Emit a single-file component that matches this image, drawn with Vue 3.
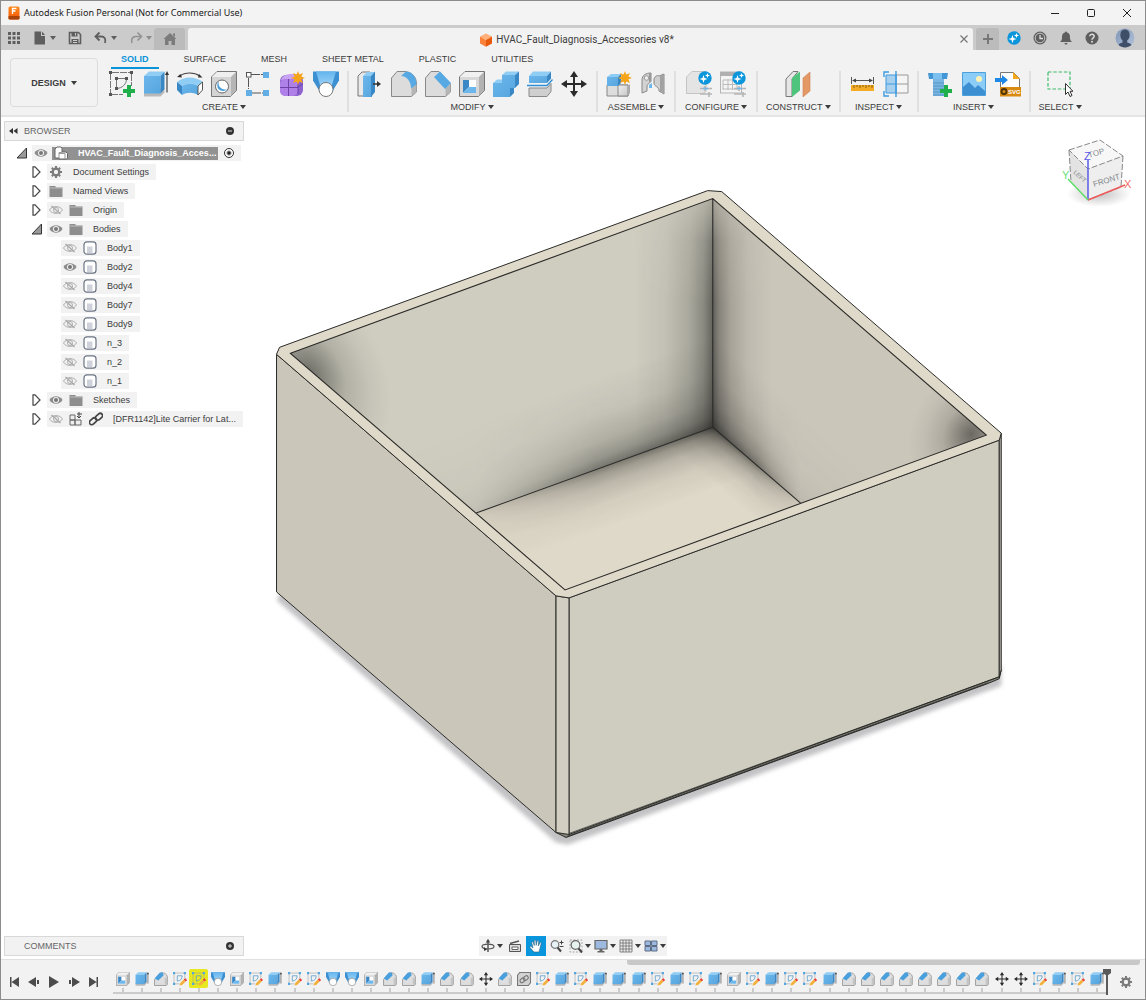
<script setup>
import { ref } from 'vue'

const tabs = ['SOLID', 'SURFACE', 'MESH', 'SHEET METAL', 'PLASTIC', 'UTILITIES']
const activeTab = ref('SOLID')

const groups = [
  { name: 'CREATE', icons: ['sketch-new', 'extrude', 'revolve', 'hole', 'pattern', 'form', 'loft'] },
  { name: 'MODIFY', icons: ['presspull', 'fillet', 'chamfer', 'shell', 'combine', 'split', 'move'] },
  { name: 'ASSEMBLE', icons: ['component', 'joint'] },
  { name: 'CONFIGURE', icons: ['config', 'config-table'] },
  { name: 'CONSTRUCT', icons: ['plane'] },
  { name: 'INSPECT', icons: ['measure', 'section'] },
  { name: 'INSERT', icons: ['bolt', 'picture', 'svgfile'] },
  { name: 'SELECT', icons: ['select'] }
]

const body = (label, shown = false) => ({ label, level: 2, icons: [shown ? 'eye' : 'eye-off', 'body'] })
const rows = [
  { label: 'Document Settings', level: 1, fold: 'closed', icons: ['gear'] },
  { label: 'Named Views', level: 1, fold: 'closed', icons: ['folder'] },
  { label: 'Origin', level: 1, fold: 'closed', icons: ['eye-off', 'folder'] },
  { label: 'Bodies', level: 1, fold: 'open', icons: ['eye', 'folder'] },
  body('Body1'), body('Body2', true), body('Body4'), body('Body7'), body('Body9'),
  body('n_3'), body('n_2'), body('n_1'),
  { label: 'Sketches', level: 1, fold: 'closed', icons: ['eye', 'folder'] },
  { label: '[DFR1142]Lite Carrier for Lat...', level: 1, fold: 'closed', icons: ['eye-off', 'linked', 'chain'] }
]

// One letter per timeline feature, oldest first.
const kinds = { h: 'shell', e: 'extrude', c: 'bevel', s: 'sketch', l: 'loft', m: 'move', k: 'derive' }
const features = [...'hecsslhsessllhccecc', ...'mckseseeesesehsessecccccccc', ...'mmsese'].map(k => kinds[k])
const selectedFeature = 4

const playback = ['first', 'prev', 'play', 'next', 'last']
const nav = [
  { id: 'orbit', drop: true }, { id: 'look' }, { id: 'hand', on: true }, { id: 'zoom' },
  { id: 'fit', drop: true }, { id: 'display', drop: true }, { id: 'gridset', drop: true }, { id: 'views', drop: true }
]
</script>

<template>
  <div class="app">
    <svg class="sprite" aria-hidden="true">
      <defs>
        <linearGradient id="gBlue" x1="0" y1="0" x2="1" y2="1"><stop offset="0" stop-color="#6bb7ec" /><stop offset="1" stop-color="#57a5de" /></linearGradient>
        <linearGradient id="gLoft" x1="0" y1="0" x2="0" y2="1"><stop offset="0" stop-color="#64b5ee" /><stop offset="1" stop-color="#a9dafa" /></linearGradient>
        <linearGradient id="gGrey" x1="0" y1="0" x2="1" y2="1"><stop offset="0" stop-color="#f1f1f1" /><stop offset="1" stop-color="#c6c6c6" /></linearGradient>
        <linearGradient id="gApp" x1="0" y1="0" x2="0" y2="1"><stop offset="0" stop-color="#ff8a1c" /><stop offset="1" stop-color="#f25505" /></linearGradient>
        <linearGradient id="gAvatar" x1="0" y1="0" x2="1" y2="1"><stop offset="0" stop-color="#7f95b5" /><stop offset="1" stop-color="#b4c3dc" /></linearGradient>
      </defs>

      <symbol id="sketch-new" viewBox="0 0 26 26">
        <g fill="none" stroke="#777" stroke-width="1"><path d="M1.500 2v21M3 1.500h19M22.500 3v12M2 23.500h12" stroke-dasharray="7 1" /><path d="M7.500 8v8.500M8 7.500h10.500M17.500 8c0 5-4 9-9.500 9.500" /></g>
        <g fill="#555"><path d="M0 0h3v3H0zM21 0h3v3h-3zM0 22h3v3H0zM6 6h3v3H6zM16 6h3v3h-3zM6 16h3v3H6z" /></g>
        <path d="M18 14h4v4h4v4h-4v4h-4v-4h-4v-4h4z" fill="#1fb04c" />
      </symbol>
      <symbol id="extrude" viewBox="0 0 26 26">
        <path d="M1 20v5.500h16.500l4-4V17z" fill="#b9b9b9" />
        <path d="M1 5l5-4.500h15.500l-4 4.500z" fill="#8fcdf5" /><path d="M1 5h16.500v17.500H1z" fill="url(#gBlue)" /><path d="M17.500 5l4-4.500v17.500l-4 4.500z" fill="#3987c5" />
        <path d="M24 3v18.500" stroke="#444" stroke-width="1.200" /><path d="M24 0l2 4h-4z" fill="#333" />
      </symbol>
      <symbol id="revolve" viewBox="0 0 26 26">
        <path d="M3 5c5-4 14-4 20 0" fill="none" stroke="#444" stroke-width="1.200" /><path d="M0 6l3.500-3 1.500 3.500zM25.500 6.500L22 3l-1 3.500z" fill="#333" />
        <path d="M0 11c7-6 18-6 26 0l-5 4c-5-3-11-3-16 0z" fill="#8fcdf5" /><path d="M0 11l5 4v9l-5-5z" fill="#3987c5" /><path d="M5 15c5-3 11-3 16 0v9c-5-3-11-3-16 0z" fill="url(#gBlue)" />
        <path d="M21 15l4.500-4v8L21 24z" fill="#fff" stroke="#555" />
      </symbol>
      <symbol id="hole" viewBox="0 0 26 26">
        <path d="M.500 6L6 .500h19.500v19l-6 6H.500z" fill="#d4d4d4" stroke="#777" /><path d="M1 6L6 1h19l-5 5z" fill="#efefef" /><path d="M20 6l5-5v18.500l-5 5.500z" fill="#b5b5b5" />
        <circle cx="11" cy="15.500" r="6.500" fill="#fff" stroke="#666" /><path d="M8 10.500a5.500 5.500 0 1 0 8 7.500a6 6 0 0 1-8-7.500z" fill="#4c9edb" />
      </symbol>
      <symbol id="pattern" viewBox="0 0 26 26">
        <path d="M6 3.500h12M3.500 7v11M7 22h11" stroke="#555" fill="none" stroke-dasharray="9 1" /><rect x="1.500" y="1.500" width="4.500" height="4.500" fill="#fff" stroke="#555" />
        <g fill="#62aee5"><path d="M18 1h6v6h-6zM1 19h6v6H1zM18 19h6v6h-6z" /></g>
      </symbol>
      <symbol id="form" viewBox="0 0 26 26">
        <rect x="1" y="4" width="23" height="21" rx="6" fill="#8f63cf" /><path d="M2 9c2-5 6-6 10-6h10l-4 6z" fill="#c9a4f2" /><rect x="1" y="8" width="18" height="17" rx="5" fill="#ae80e8" />
        <path d="M9.500 8v17M1 16.500h18l5-4M19 9v14" fill="none" stroke="#6d43a8" stroke-width="1" />
        <path d="M19 0l1.300 3.600L24 2l-1.600 3.600L26 7l-3.600 1.300L24 12l-3.700-1.600L19 14l-1.400-3.600L14 12l1.600-3.700L12 7l3.600-1.400L14 2l3.600 1.600z" fill="#f6a51a" />
      </symbol>
      <symbol id="loft" viewBox="0 0 26 26">
        <path d="M0 .500h26v9L19 21H7L0 9.500z" fill="#3c8fd0" /><path d="M3 .500h20L17.500 19h-9z" fill="url(#gLoft)" /><circle cx="13" cy="18.500" r="7" fill="#fff" stroke="#777" />
      </symbol>
      <symbol id="presspull" viewBox="0 0 26 26">
        <path d="M1 5l4-4h8v20l-4 4H1z" fill="#e8e8e8" stroke="#777" /><path d="M6 5l4-4h8l-4 4z" fill="#8fcdf5" /><path d="M6 5h9v21H6z" fill="url(#gBlue)" /><path d="M14 5l4-4.500V21l-4 5z" fill="#3987c5" />
        <path d="M16 13h5" stroke="#333" stroke-width="1.500" /><path d="M20 10l4 3-4 3z" fill="#333" />
      </symbol>
      <symbol id="fillet" viewBox="0 0 26 26">
        <path d="M.500 7L6 .500h8C21 1 25.500 6 25.500 13v8l-5 4.500H.500z" fill="#dcdcdc" stroke="#888" /><path d="M20.500 17l5-4v8l-5 4z" fill="#b5b5b5" />
        <path d="M10 5l5-4.500c7 .5 10.500 6 10.500 13L20 17.500C20 10 16 5.500 10 5z" fill="#57a9e3" />
      </symbol>
      <symbol id="chamfer" viewBox="0 0 26 26">
        <path d="M.500 7L6 .500h8L25.500 13v8l-5 4.500H.500z" fill="#dcdcdc" stroke="#888" /><path d="M20.500 17l5-4v8l-5 4z" fill="#b5b5b5" /><path d="M9 6l6-5.500L26 12l-6 6z" fill="#57a9e3" />
      </symbol>
      <symbol id="bevel" viewBox="0 0 26 26">
        <path d="M1 14L12 2c8-2 13 3 13 9v12l-2 2H1z" fill="#dedede" stroke="#8e8e8e" stroke-width="1.500" /><path d="M20 11l5-1v13l-5 1z" fill="#c4c4c4" /><path d="M1 12L11 1h5l2 5L8 16z" fill="#4a9fdd" />
      </symbol>
      <symbol id="shell" viewBox="0 0 26 26">
        <path d="M.500 6L6 .500h19.500v19l-6 6H.500z" fill="#d8d8d8" stroke="#777" /><path d="M1 6L6 1h19l-5 5z" fill="#f1f1f1" /><path d="M20 6l5-5v18.500l-5 5.500z" fill="#b2b2b2" />
        <path d="M4 9h13v13H4z" fill="#fff" /><path d="M4 9l6 0v7l-6 6z" fill="#3987c5" /><path d="M4 22l6-6h7v6z" fill="#6bb7ec" />
      </symbol>
      <symbol id="combine" viewBox="0 0 26 26">
        <path d="M9 4l4-3.500h13l-4 3.500zM0 12l4-3.500h6V12z" fill="#8fcdf5" /><path d="M9 4h13v13h-5v9H0V12h9z" fill="url(#gBlue)" /><path d="M22 4l4-3.500V13l-4 4zM17 17h4v5l-4 4z" fill="#3987c5" />
      </symbol>
      <symbol id="split" viewBox="0 0 26 26">
        <path d="M2 5l4-4.500h18L20 5z" fill="#8fcdf5" /><path d="M2 5h18v7H2z" fill="url(#gBlue)" /><path d="M20 5l4-4.500v7L20 12z" fill="#3987c5" />
        <path d="M2 17h18l4-4.500v8l-4 5H2z" fill="#cfcfcf" stroke="#888" /><path d="M0 14.500h20l5.500-6" fill="none" stroke="#2f8fd6" stroke-width="1.300" />
      </symbol>
      <symbol id="move" viewBox="0 0 26 26">
        <path d="M13 3v20M3 13h20" stroke="#2b2b2b" stroke-width="2" /><path d="M13 0l4 6H9zM13 26l4-6H9zM0 13l6-4v8zM26 13l-6-4v8z" fill="#2b2b2b" />
      </symbol>
      <symbol id="component" viewBox="0 0 26 26">
        <path d="M1 14h21v11H1z" fill="#ddd" stroke="#888" /><path d="M12 14h10v11H12z" fill="url(#gGrey)" stroke="#888" /><path d="M22 15l2-2v9l-2 3z" fill="#aaa" />
        <path d="M1 6l4-3h10l-3 3z" fill="#8fcdf5" /><path d="M1 6h11v9H1z" fill="url(#gBlue)" /><path d="M12 6l3-3v9l-3 3z" fill="#3987c5" />
        <path d="M19 0l1.300 3.600L24 2l-1.600 3.600L26 7l-3.600 1.300L24 12l-3.700-1.600L19 14l-1.400-3.600L14 12l1.600-3.700L12 7l3.600-1.400L14 2l3.600 1.600z" fill="#f6a51a" />
      </symbol>
      <symbol id="joint" viewBox="0 0 26 26">
        <path d="M2 22V9c0-5 4-7 9-7v8c0 2-4 2-4 6v4z" fill="#d2d2d2" stroke="#888" /><path d="M9 2.500l2-.5v8c-1 1-2 1-2 1z" fill="#999" /><circle cx="6.500" cy="7" r="2.300" fill="#eee" stroke="#999" /><path d="M9 14v3h3v-5z" fill="#6bb7ec" />
        <path d="M14 8c1-3 3-4 5-3l5-2v20l-5-3c0-5-5-4-5-8z" fill="#cfcfcf" stroke="#888" /><path d="M20 5l4-2v20l-4-2z" fill="#a2a2a2" />
      </symbol>
      <symbol id="badge" viewBox="0 0 14 14"><circle cx="7" cy="7" r="6.700" fill="#0b96dc" /><path d="M5.500 4l1 3 3 1-3 1-1 3-1-3-3-1 3-1zM9.500 2l.7 1.800L12 4.500l-1.800.7L9.500 7l-.7-1.800L7 4.500l1.800-.7z" fill="#fff" /></symbol>
      <symbol id="config" viewBox="0 0 26 26">
        <path d="M.500 6L6 .500h14v20l-3 2H.500z" fill="#e4e4e4" stroke="#c4c4c4" /><path d="M14 17.500h12M14 23h12M19 15v5M23 21v5" stroke="#b5b5b5" stroke-width="1.600" /><path d="M17 17.500h5" stroke="#76b9e8" stroke-width="1.600" />
        <use href="#badge" x="12" y="0" width="14" height="14" />
      </symbol>
      <symbol id="config-table" viewBox="0 0 26 26">
        <rect x=".500" y="1" width="21" height="21" fill="#f4f4f4" stroke="#b5b5b5" /><path d="M0 1h20v4H0z" fill="#b0b0b0" /><path d="M3 9h14M3 13.500h14M3 18h14M3 9v10M8 8v11M12.500 8v11M17 8v11" stroke="#bbb" fill="none" />
        <path d="M14 17.500h12M14 23h12M19 15v5M23 21v5" stroke="#b5b5b5" stroke-width="1.600" /><path d="M17 17.500h5" stroke="#76b9e8" stroke-width="1.600" /><use href="#badge" x="12" y="0" width="14" height="14" />
      </symbol>
      <symbol id="plane" viewBox="0 0 26 26">
        <path d="M1 8L8 .500h5L7 8v17.500H1z" fill="#e6e6e6" stroke="#777" /><path d="M7 7l8-6.500v19L7 26z" fill="#4fc47c" /><path d="M18 7l7-6v19l-7 6z" fill="#e49865" stroke="#cc8250" stroke-width=".600" />
      </symbol>
      <symbol id="measure" viewBox="0 0 26 26">
        <path d="M2.500 6v7M24.500 6v7" stroke="#555" stroke-width="1" /><path d="M4 9.500h19" stroke="#555" /><path d="M3 9.500l4-2v4zM24 9.500l-4-2v4z" fill="#444" />
        <path d="M2 14h23v6H2z" fill="#f4ab25" /><path d="M5 14v3M8 14v2M11 14v3M14 14v2M17 14v3M20 14v2M23 14v3" stroke="#8a5d10" />
      </symbol>
      <symbol id="section" viewBox="0 0 26 26">
        <path d="M13 4h12v18H13z" fill="#f4f4f4" stroke="#999" /><path d="M3 4h10v18H3z" fill="#a9cfee" stroke="#3c9be0" /><path d="M13 13h12" stroke="#999" /><path d="M3 13h10" stroke="#3c9be0" />
        <path d="M6 1H1v5M1 20v5h5M13 0v26" fill="none" stroke="#3c9be0" stroke-width="1.400" />
      </symbol>
      <symbol id="bolt" viewBox="0 0 26 26">
        <path d="M1 2h20l-1 6H2z" fill="#4397d6" /><path d="M6 2h9v6H6z" fill="#7cc0f0" /><path d="M6 8h11v17H6z" fill="#7ab6e2" /><path d="M6 12h11M6 15h11M6 18h11M6 21h11M6 24h11" stroke="#5895c4" />
        <path d="M17 14h4v4h4v4h-4v4h-4v-4h-4v-4h4z" fill="#1fb04c" />
      </symbol>
      <symbol id="picture" viewBox="0 0 26 26">
        <path d="M1.500 1.500h23v23h-23z" fill="#8ccdf7" stroke="#4b9fdb" /><path d="M2 16l6-5 6 6 3-3 7 6v4H2z" fill="#3c8fd0" /><circle cx="18" cy="8" r="3" fill="#fff2b5" />
      </symbol>
      <symbol id="svgfile" viewBox="0 0 26 26">
        <path d="M5.500 1.500h13l6 6v17h-19z" fill="#fff" stroke="#777" /><path d="M18 1v7h7z" fill="#f4a81e" /><path d="M0 7h7V4l6 5-6 5v-3H0z" fill="#1e88e5" /><path d="M5 16h21v9.500H5z" fill="#d98a12" />
        <circle cx="9" cy="20.500" r="2.500" fill="none" stroke="#4d3205" stroke-width="1.800" />
      </symbol>
      <symbol id="select" viewBox="0 0 26 26">
        <path d="M1 1h22v17H1z" fill="none" stroke="#3dbb6b" stroke-width="1.200" stroke-dasharray="3.500 1.800" /><path d="M18.500 12.500v11l2.500-2.500 2 4.500 2-1-2-4.200h3z" fill="#fff" stroke="#333" />
      </symbol>
      <symbol id="sketch" viewBox="0 0 26 26">
        <path d="M2 2h20M2 2v20M22 2v10M2 22h10" stroke="#9a9a9a" fill="none" /><g fill="#4fa6e0"><path d="M0 0h4v4H0zM20 0h4v4h-4zM0 20h4v4H0z" /></g>
        <path d="M8 7h9c0 6-3 9-9 10z" fill="none" stroke="#5b9cc8" stroke-width="1.500" /><path d="M12 25l1.500-4.500L20 14l3.500 3.500L17 24z" fill="#f3b13c" /><path d="M20 14l2-2c1-1 4 2 3.500 3.500L23.500 17.500z" fill="#e8413a" />
      </symbol>
      <symbol id="derive" viewBox="0 0 26 26">
        <path d="M1 6l4-5h20v19l-4 5H1z" fill="#d2d2d2" stroke="#777" stroke-width="2" /><g fill="none" stroke="#777" stroke-width="2"><rect x="5" y="12" width="10" height="7" rx="3.500" transform="rotate(-35 10 15)" /><rect x="11" y="8" width="10" height="7" rx="3.500" transform="rotate(-35 16 11)" /></g>
      </symbol>

      <symbol id="eye" viewBox="0 0 14 14"><path d="M.500 7C3 2 11 2 13.500 7 11 12 3 12 .500 7z" fill="#8d8d8d" /><circle cx="7" cy="7" r="3" fill="#f2f2f2" /><circle cx="7" cy="7" r="2" fill="#777" /></symbol>
      <symbol id="eye-off" viewBox="0 0 14 14"><g fill="none" stroke="#a6a6a6" stroke-width=".900"><path d="M.500 7C3 2.500 11 2.500 13.500 7 11 11.500 3 11.500 .500 7z" /><circle cx="7" cy="7" r="2.500" /><path d="M2.500 3l9 8" stroke-width="1.200" /></g></symbol>
      <symbol id="gear" viewBox="0 0 14 14"><circle cx="7" cy="7" r="3.300" fill="none" stroke="#7b7b7b" stroke-width="2.400" /><path d="M7 1v12M1 7h12M2.800 2.800l8.400 8.400M11.200 2.800l-8.400 8.400" stroke="#7b7b7b" stroke-width="2" stroke-dasharray="2 8" /><circle cx="7" cy="7" r="2.100" fill="#f2f2f2" /></symbol>
      <symbol id="folder" viewBox="0 0 14 14"><path d="M.500 2h6v1.500h7V13H.500z" fill="#8e8e8e" /><path d="M.500 4h13" stroke="#bcbcbc" /></symbol>
      <symbol id="body" viewBox="0 0 14 14"><rect x="1" y=".800" width="12" height="12.400" rx="3" fill="#fff" stroke="#6a7382" stroke-width="1.200" /><path d="M4 5.500h5.500V12H4z" fill="#d0d2db" /></symbol>
      <symbol id="linked" viewBox="0 0 14 14"><path d="M1 3h5v5H1zM1 8h5v5H1zM6 8h6v5H6z" fill="#eee" stroke="#666" /><path d="M10 0v6M8 4l2 2 2-2M8 2h5" fill="none" stroke="#444" /></symbol>
      <symbol id="chain" viewBox="0 0 14 14"><g fill="none" stroke="#444" stroke-width="1.700"><rect x="0" y="7" width="8" height="4.600" rx="2.300" transform="rotate(-42 4 9.300)" /><rect x="6" y="2.500" width="8" height="4.600" rx="2.300" transform="rotate(-42 10 4.800)" /></g></symbol>
      <symbol id="assembly" viewBox="0 0 14 14"><path d="M1 3L3 1h4l1 1v4h4l1.500 1.500V12l-1 1H5v-1H1z" fill="#fff" stroke="#666" /><path d="M5 12V6.500h3M5 7.500h6V13" fill="none" stroke="#999" /></symbol>

      <symbol id="apps" viewBox="0 0 14 14"><path d="M1 1h3v3H1zM5.500 1h3v3h-3zM10 1h3v3h-3zM1 5.500h3v3H1zM5.500 5.500h3v3h-3zM10 5.500h3v3h-3zM1 10h3v3H1zM5.500 10h3v3h-3zM10 10h3v3h-3z" fill="#5e5e5e" /></symbol>
      <symbol id="file" viewBox="0 0 14 14"><path d="M1.500.500H8V5h4v8.500H1.500zM9 .500L12 4H9z" fill="#5e5e5e" /></symbol>
      <symbol id="save" viewBox="0 0 14 14"><path d="M1.500 1.500h9l2 2v9h-11z" fill="none" stroke="#5e5e5e" stroke-width="1.600" /><path d="M3.500 1h6v4.500h-6zM3.500 8h7v5h-7z" fill="#5e5e5e" /><path d="M7.500 2v2.500M5 9.500h4M5 11.500h4" stroke="#cbcbcb" /></symbol>
      <symbol id="undo" viewBox="0 0 14 14"><path d="M2 5.500h5c4 0 5 3 4 6.500" fill="none" stroke="#5e5e5e" stroke-width="1.800" /><path d="M5.500 1.500L1.500 5.500l4 4" fill="none" stroke="#5e5e5e" stroke-width="1.800" /></symbol>
      <symbol id="redo" viewBox="0 0 14 14"><path d="M12 5.500H7c-4 0-5 3-4 6.500" fill="none" stroke="#929292" stroke-width="1.600" /><path d="M8.500 1.500l4 4-4 4" fill="none" stroke="#929292" stroke-width="1.600" /></symbol>
      <symbol id="home" viewBox="0 0 14 14"><path d="M7 1l6.500 6H12v6H8.500V9h-3v4H2V7H.500zM10 1.500h2V5l-2-2z" fill="#7b7b7b" /></symbol>
      <symbol id="cube" viewBox="0 0 14 14"><path d="M7 .500l6 3-6 3.500-6-3.500z" fill="#ffb07a" /><path d="M1 3.500L7 7v6.800L1 10.500z" fill="#fb8238" /><path d="M13 3.500L7 7v6.800l6-3.300z" fill="#e8590c" /></symbol>
      <symbol id="clock" viewBox="0 0 14 14"><circle cx="7" cy="7" r="6.500" fill="#5e5e5e" /><circle cx="7" cy="7" r="4.800" fill="none" stroke="#c9c9c9" /><path d="M7 4v3.500h3" fill="none" stroke="#ddd" stroke-width="1.300" /></symbol>
      <symbol id="bell" viewBox="0 0 14 14"><path d="M7 .500c1 0 1.300.8 1.300 1.300C11 2.500 11 5 11 7c0 2 1 3 2 4H1c1-1 2-2 2-4 0-2 0-4.500 2.700-5.200C5.700 1.300 6 .500 7 .500zM5.500 12h3c0 2-3 2-3 0z" fill="#5e5e5e" /></symbol>
      <symbol id="help" viewBox="0 0 14 14"><circle cx="7" cy="7" r="6.500" fill="#5e5e5e" /><path d="M4.800 5.300C4.800 2.500 9.300 2.700 9.200 5.300 9.200 6.800 7 7 7 8.800" fill="none" stroke="#ddd" stroke-width="1.500" /><circle cx="7" cy="10.800" r="1" fill="#ddd" /></symbol>
      <symbol id="avatar" viewBox="0 0 20 20"><circle cx="10" cy="10" r="9.500" fill="url(#gAvatar)" /><path d="M5.500 6c0-6 9-6 9 0 .6 3-.8 5-2.300 6.500v2c2 .7 4 1.300 4.300 2.500-4 3.500-9.500 3-13 0 .3-1.200 2-1.800 4-2.500v-2C6.200 11 4.900 9 5.500 6z" fill="#3f4f68" /></symbol>
      <symbol id="appmark" viewBox="0 0 12 14"><rect x=".500" y=".500" width="11" height="13" rx="1.500" fill="url(#gApp)" /><path d="M.500 10h11v2.500l-1 1h-9l-1-1z" fill="#a8430a" /><path d="M4.500 8V2.500h4M4.500 5h3" fill="none" stroke="#fff" stroke-width="1.300" /></symbol>

      <symbol id="first" viewBox="0 0 14 14"><path d="M3 2h1.500v10H3zM12 2v10L4.500 7z" fill="#4c4c4c" /></symbol>
      <symbol id="prev" viewBox="0 0 14 14"><path d="M9 2v10L1 7zM10 5h2v4h-2z" fill="#4c4c4c" /></symbol>
      <symbol id="play" viewBox="0 0 14 14"><path d="M2 1v12l10-6z" fill="#4c4c4c" /></symbol>
      <symbol id="next" viewBox="0 0 14 14"><path d="M5 2v10l8-5zM2 5h2v4H2z" fill="#4c4c4c" /></symbol>
      <symbol id="last" viewBox="0 0 14 14"><path d="M9.500 2H11v10H9.500zM2 2v10l7.500-5z" fill="#4c4c4c" /></symbol>

      <symbol id="orbit" viewBox="0 0 14 14"><path d="M7 1v12M5.500 3.500L7 1l1.500 2.500" fill="none" stroke="#444" stroke-width="1.300" /><ellipse cx="7" cy="7.500" rx="6" ry="2.400" fill="none" stroke="#555" stroke-width="1.200" /><path d="M3 8l3 2.500L3 12z" fill="#333" /></symbol>
      <symbol id="look" viewBox="0 0 14 14"><path d="M1.500 5.500h11v7h-11z" fill="#ddd" stroke="#555" /><path d="M4 8h6v2.500H4z" fill="#fff" stroke="#666" /><path d="M2 4.500l9-2.500" stroke="#555" stroke-width="1.300" /></symbol>
      <symbol id="hand" viewBox="0 0 14 14"><path d="M5 13L1 8.500c-.5-1 .7-1.500 1.500-.8L4 9 2.700 3.500c0-1 1.200-1.100 1.500-.2L5.300 6.500 5.200 1.700c.1-1 1.400-1 1.600 0L7.200 6.300l1-4.200c.3-.9 1.500-.7 1.500.3L9.300 7l1.500-3c.5-.8 1.600-.3 1.300.7L10.800 10 10 13z" fill="#fff" stroke="#33617d" stroke-width=".600" /></symbol>
      <symbol id="zoom" viewBox="0 0 14 14"><circle cx="5" cy="5.500" r="3.800" fill="#e8f1f5" stroke="#777" stroke-width="1.200" /><path d="M7.500 8.500l3.500 4" stroke="#444" stroke-width="2" /><path d="M9.500 3.500h4M11.500 1.500v4M9.500 7.500h4" stroke="#444" /></symbol>
      <symbol id="fit" viewBox="0 0 14 14"><path d="M1 1h12v12H1z" fill="none" stroke="#aaa" stroke-dasharray="2 1.500" /><circle cx="6.500" cy="6" r="4.400" fill="#e6f2f0" stroke="#666" stroke-width="1.200" /><path d="M9.500 9.500l3.500 4" stroke="#444" stroke-width="2" /></symbol>
      <symbol id="display" viewBox="0 0 14 14"><path d="M1 1.500h12v8.500H1z" fill="#9db9df" stroke="#666" stroke-width="1.200" /><path d="M5.500 10h3v2h2v1.500h-7V12h2z" fill="#666" /></symbol>
      <symbol id="gridset" viewBox="0 0 14 14"><path d="M1 1h12v12H1zM1 4h12M1 7h12M1 10h12M4 1v12M7 1v12M10 1v12" fill="#eee" stroke="#777" stroke-width=".900" /></symbol>
      <symbol id="views" viewBox="0 0 14 14"><path d="M1 2h5.500v4.500H1zM7.500 2H13v4.500H7.500zM1 7.500h5.500V12H1zM7.500 7.500H13V12H7.500z" fill="#9db9df" stroke="#5d6d86" /></symbol>
    </svg>

    <header class="titlebar">
      <svg class="mark"><use href="#appmark" /></svg>
      <h1>Autodesk Fusion Personal (Not for Commercial Use)</h1>
      <div class="winctl">
        <button aria-label="Minimize"><svg viewBox="0 0 10 10"><path d="M1 5.500h8" stroke="#222" /></svg></button>
        <button aria-label="Maximize"><svg viewBox="0 0 10 10"><rect x="1.500" y="1.500" width="7" height="7" rx="1" fill="none" stroke="#222" /></svg></button>
        <button aria-label="Close window"><svg viewBox="0 0 10 10"><path d="M1 1l8 8M9 1L1 9" stroke="#222" /></svg></button>
      </div>
    </header>

    <div class="docbar">
      <div class="quick">
        <button aria-label="Data panel"><svg class="s14"><use href="#apps" /></svg></button>
        <button aria-label="File"><svg class="s14"><use href="#file" /></svg><i class="tri"></i></button>
        <button aria-label="Save"><svg class="s14"><use href="#save" /></svg></button>
        <button aria-label="Undo"><svg class="s14"><use href="#undo" /></svg><i class="tri"></i></button>
        <button aria-label="Redo" class="dim"><svg class="s14"><use href="#redo" /></svg><i class="tri"></i></button>
      </div>
      <button class="hometab" aria-label="Home"><svg class="s14"><use href="#home" /></svg></button>
      <div class="doctab">
        <span class="docname"><svg class="s14"><use href="#cube" /></svg>HVAC_Fault_Diagnosis_Accessories v8*</span>
        <button class="closedoc" aria-label="Close document"><svg viewBox="0 0 10 10"><path d="M1.500 1.500l7 7M8.500 1.500l-7 7" stroke="#777" stroke-width="1.200" /></svg></button>
      </div>
      <button class="newtab" aria-label="New document"><svg viewBox="0 0 12 12"><path d="M6 1v10M1 6h10" stroke="#777" stroke-width="2" /></svg></button>
      <div class="account">
        <button aria-label="Extensions"><svg class="s14"><use href="#badge" /></svg></button>
        <button aria-label="Job status"><svg class="s14"><use href="#clock" /></svg></button>
        <button aria-label="Notifications"><svg class="s14"><use href="#bell" /></svg></button>
        <button aria-label="Help"><svg class="s14"><use href="#help" /></svg></button>
      </div>
      <button class="avatar" aria-label="Account"><svg><use href="#avatar" /></svg></button>
    </div>

    <div class="ribbon">
      <button class="workspace">DESIGN <i class="tri"></i></button>
      <div class="tools">
        <nav class="tabs">
          <button v-for="t in tabs" :key="t" :class="{ on: t === activeTab }" @click="activeTab = t">{{ t }}</button>
        </nav>
        <div class="groups">
          <section v-for="g in groups" :key="g.name" class="group">
            <div class="icons">
              <button v-for="i in g.icons" :key="i" :aria-label="i">
                <svg viewBox="0 0 26 26"><use :href="'#' + i" /><text v-if="i === 'svgfile'" class="filetag" x="13" y="23">SVG</text></svg>
              </button>
            </div>
            <button class="gname">{{ g.name }}<i class="tri"></i></button>
          </section>
        </div>
      </div>
    </div>

    <main class="canvas">
      <svg class="model" viewBox="0 117 1146 842" aria-label="3D model of an open box">
        <defs>
          <filter id="soft" x="-10%" y="-10%" width="120%" height="120%"><feGaussianBlur stdDeviation="2" /></filter>
          <linearGradient id="edgeL" gradientUnits="userSpaceOnUse" x1="713" y1="0" x2="635" y2="0"><stop offset="0" stop-color="#1c1c1a" stop-opacity=".6" /><stop offset=".12" stop-color="#1c1c1a" stop-opacity=".38" /><stop offset=".3" stop-color="#1c1c1a" stop-opacity=".21" /><stop offset=".6" stop-color="#1c1c1a" stop-opacity=".07" /><stop offset="1" stop-color="#1c1c1a" stop-opacity="0" /></linearGradient>
          <linearGradient id="edgeR" href="#edgeL" x1="713" y1="0" x2="772" y2="0" />
          <linearGradient id="baseWall" href="#edgeL" x1="713" y1="427" x2="684" y2="347" />
          <linearGradient id="baseRight" href="#edgeL" x1="713" y1="427" x2="758" y2="375" />
          <linearGradient id="floorL" href="#edgeL" x1="713" y1="427" x2="733" y2="482" />
          <linearGradient id="floorR" href="#edgeL" x1="713" y1="427" x2="686" y2="458" />
          <linearGradient id="fadeL" gradientUnits="userSpaceOnUse" x1="713" y1="0" x2="476" y2="0"><stop offset="0" stop-color="#fff" /><stop offset=".5" stop-color="#ccc" /><stop offset="1" stop-color="#222" /></linearGradient>
          <linearGradient id="fadeR" href="#fadeL" x1="713" y1="0" x2="801" y2="0" />
          <linearGradient id="fadeUp" href="#fadeL" x1="0" y1="300" x2="0" y2="180" />
          <mask id="maskL" maskUnits="userSpaceOnUse" x="270" y="190" width="740" height="410"><path d="M270 190h740v410H270z" fill="url(#fadeL)" /></mask>
          <mask id="maskR" maskUnits="userSpaceOnUse" x="270" y="190" width="740" height="410"><path d="M270 190h740v410H270z" fill="url(#fadeR)" /></mask>
          <mask id="maskUp" maskUnits="userSpaceOnUse" x="270" y="190" width="740" height="410"><path d="M270 190h740v410H270z" fill="url(#fadeUp)" /></mask>
          <radialGradient id="ao" gradientUnits="userSpaceOnUse" cx="0" cy="0" r="1"><stop offset="0" stop-color="#1c1c1a" stop-opacity=".55" /><stop offset=".2" stop-color="#1c1c1a" stop-opacity=".38" /><stop offset=".45" stop-color="#1c1c1a" stop-opacity=".16" /><stop offset=".75" stop-color="#1c1c1a" stop-opacity=".05" /><stop offset="1" stop-color="#1c1c1a" stop-opacity="0" /></radialGradient>
          <radialGradient id="aoLeft" href="#ao" gradientTransform="translate(308 374) rotate(60) scale(105 75)" />
          <radialGradient id="aoCorner" href="#ao" gradientTransform="translate(972 434) rotate(-60) scale(72 60)" />
        </defs>
        <path d="M276 600l280 243 12 2 434-159v-20L569 800 300 560z" fill="#a9a9ac" filter="url(#soft)" opacity=".7" />
        <g stroke="#2a2a28" stroke-linejoin="round">
          <path d="M556 833l13 1 431-158 2-6-2 9-12 5-422 154z" fill="#86857c" />
          <path d="M276 354l280 242v237L276 592z" fill="#cbc6ba" />
          <path d="M569 598l431-158v237L569 835z" fill="#cfcdc0" />
          <path d="M556 596l13 2v237l-13-2z" fill="#d2cec1" />
          <path d="M1000 440l2-7v237l-2 7z" fill="#b5b3a8" />
          <path d="M708 190l14 1 280 242-2 7-431 158-13-2-280-242 3-7z" fill="#dfd9c9" />
          <path d="M569 834l431-157M567 837l422-154" fill="none" stroke-width=".700" />
        </g>
        <path d="M290 353l423-155v229l-237 86z" fill="#cfcdc0" />
        <path d="M713 198l274 237-186 68-88-76z" fill="#cbc6ba" />
        <path d="M713 427l88 76-236 87-89-77z" fill="#dfd9c9" />
        <g mask="url(#maskUp)"><path d="M290 353l423-155v229l-237 86z" fill="url(#edgeL)" /><path d="M713 198l274 237-186 68-88-76z" fill="url(#edgeR)" /></g>
        <path d="M290 353l423-155v229l-237 86z" fill="url(#aoLeft)" />
        <path d="M713 198l274 237-186 68-88-76z" fill="url(#aoCorner)" />
        <g mask="url(#maskL)"><path d="M290 353l423-155v229l-237 86z" fill="url(#baseWall)" /><path d="M713 427l88 76-236 87-89-77z" fill="url(#floorL)" /></g>
        <g mask="url(#maskR)"><path d="M713 198l274 237-186 68-88-76z" fill="url(#baseRight)" /><path d="M713 427l88 76-236 87-89-77z" fill="url(#floorR)" /></g>
        <path d="M290 353l423-155 274 237-422 155zM713 198v229l88 76M713 427l-237 86" fill="none" stroke="#2a2a28" stroke-width="1.100" />
      </svg>

      <div class="upper">
        <aside class="browser">
          <div class="panelhead"><span class="lead"><svg viewBox="0 0 10 8"><path d="M5 1v6L1 4zM9.500 1v6L5.500 4z" fill="#333" /></svg></span>BROWSER<button aria-label="Collapse browser"><svg viewBox="0 0 10 10"><circle cx="5" cy="5" r="4" fill="#333" /><path d="M3 5h4" stroke="#ddd" /></svg></button></div>
          <ul class="tree">
            <li class="row l0">
              <button class="fold" aria-label="Fold root"><svg viewBox="0 0 12 12"><path d="M10.500 1v10H1z" fill="#999" stroke="#333" /></svg></button>
              <div class="cell">
                <svg class="s14"><use href="#eye" /></svg>
                <div class="rootname"><svg class="s14"><use href="#assembly" /></svg><span>HVAC_Fault_Diagnosis_Acces...</span></div>
                <input type="radio" checked aria-label="Activate component" />
              </div>
            </li>
            <li v-for="r in rows" :key="r.label" class="row" :class="'l' + r.level">
              <button v-if="r.fold" class="fold" :aria-label="'Fold ' + r.label">
                <svg v-if="r.fold === 'open'" viewBox="0 0 12 12"><path d="M10.500 1v10H1z" fill="#999" stroke="#333" /></svg>
                <svg v-else viewBox="0 0 12 12"><path d="M2 .800l2 0 5 5.200-5 5.200H2z" fill="#fff" stroke="#444" stroke-width="1.200" /></svg>
              </button>
              <div class="cell"><svg v-for="i in r.icons" :key="i" class="s14"><use :href="'#' + i" /></svg><span class="label">{{ r.label }}</span></div>
            </li>
          </ul>
        </aside>
        <svg class="viewcube" viewBox="0 0 90 90" aria-label="View cube">
          <defs><radialGradient id="cubeShade"><stop offset="0" stop-color="#999" stop-opacity=".6" /><stop offset="1" stop-color="#999" stop-opacity="0" /></radialGradient></defs>
          <ellipse cx="44" cy="68" rx="32" ry="13" fill="url(#cubeShade)" />
          <g transform="translate(2 0)">
            <path d="M12 24L43 14l23 16-35 13z" fill="#f7f7f7" /><path d="M12 24l19 19v31L14 56z" fill="#e3e3e3" /><path d="M31 43l35-13-2 31-33 13z" fill="#eeeeee" />
            <path d="M12 24L43 14l23 16-35 13zM12 24l2 32 17 18M66 30l-2 31-33 13" fill="none" stroke="#888" stroke-dasharray="6 2" />
            <g font-family="Liberation Sans, sans-serif" fill="#858a8f"><text x="31" y="30" font-size="8" transform="rotate(-16 38 27)">TOP</text><text x="37" y="61" font-size="8" transform="rotate(-17 37 61)">FRONT</text><text x="16" y="47" font-size="6" transform="rotate(42 16 47)">LEFT</text></g>
            <path d="M31 74V34" stroke="#5a5ae8" stroke-width="1.500" /><path d="M31 74l37-15" stroke="#ee5a5a" stroke-width="1.500" /><path d="M31 74L11 53" stroke="#5fe06a" stroke-width="1.500" />
            <g font-family="Liberation Sans, sans-serif" font-size="11"><text x="27" y="34" fill="#5a5ae8">Z</text><text x="67" y="62" fill="#f06a6a">X</text><text x="5" y="53" fill="#6fe07a">Y</text></g>
          </g>
        </svg>
      </div>

      <div class="lower">
        <div class="panelhead comments"><span class="lead"></span>COMMENTS<button aria-label="Expand comments"><svg viewBox="0 0 10 10"><circle cx="5" cy="5" r="4" fill="#333" /><path d="M3 5h4M5 3v4" stroke="#ddd" /></svg></button></div>
        <div class="navbar">
          <button v-for="n in nav" :key="n.id" :class="{ on: n.on, drop: n.drop }" :aria-label="n.id"><svg class="s14"><use :href="'#' + n.id" /></svg><i v-if="n.drop" class="tri"></i></button>
        </div>
      </div>
    </main>

    <footer class="timeline">
      <div class="scroll"><div class="thumb"></div></div>
      <div class="strip">
        <div class="playback">
          <button v-for="p in playback" :key="p" :aria-label="p"><svg class="s14"><use :href="'#' + p" /></svg></button>
        </div>
        <ol class="features">
          <li v-for="(f, i) in features" :key="i">
            <button :class="{ sel: i === selectedFeature }" :aria-label="f"><svg class="s14"><use :href="'#' + f" /></svg></button>
            <svg v-if="i === features.length - 1" class="playhead" viewBox="0 0 8 26"><path d="M0 0h8v4L4 7 0 4z" fill="#5a5a5a" /><path d="M4 4v22" stroke="#5a5a5a" stroke-width="2" /></svg>
          </li>
        </ol>
        <button class="settings" aria-label="Timeline settings"><svg class="s14"><use href="#gear" /></svg></button>
      </div>
    </footer>
  </div>
</template>

<style>
body { margin: 0; background: #fff; }
</style>

<style scoped>
.app { box-sizing: border-box; min-height: 100vh; display: flex; flex-direction: column; border: 1px solid #8c8c8c; background: #fff; color: #3c3c3c; font: 9px/12px "Liberation Sans", Arial, sans-serif; }
.sprite { position: absolute; width: 0; height: 0; }
button { border: 0; padding: 0; margin: 0; background: none; font: inherit; color: inherit; display: flex; align-items: center; justify-content: center; }
svg { display: block; flex: none; }
.s14 { width: 14px; height: 14px; }
.tri { width: 0; height: 0; border: 3px solid transparent; border-top: 4px solid currentColor; border-bottom: 0; }

.titlebar { height: 24px; display: flex; align-items: center; background: #f3f3f3; }
.mark { width: 12px; height: 14px; margin-left: 7px; }
.titlebar h1 { margin: 0 0 0 4px; font: 400 9px/14px "Noto Sans", "Open Sans", sans-serif; color: #1a1a1a; }
.winctl { margin-left: auto; display: flex; }
.winctl button { width: 36px; height: 24px; }
.winctl svg { width: 10px; height: 10px; }

.docbar { height: 25px; display: flex; align-items: flex-end; background: #cbcbcb; color: #5e5e5e; }
.quick { display: flex; gap: 12px; align-items: center; height: 25px; padding-left: 6px; }
.quick button { gap: 3px; }
.quick .dim { color: #8c8c8c; }
.hometab { width: 31px; height: 22px; margin: 0 3px 0 2px; border-radius: 3px 3px 0 0; background: #bbb; }
.doctab { flex: 1; height: 22px; display: flex; align-items: center; border-radius: 3px 3px 0 0; background: #f2f2f2; }
.docname { flex: 1; display: flex; justify-content: center; align-items: center; gap: 3px; padding: 2px 0 0 10px; font: 10px/14px Roboto, sans-serif; color: #3c3c3c; }
.closedoc { width: 18px; height: 22px; }
.closedoc svg { width: 10px; height: 10px; }
.newtab { width: 23px; height: 22px; margin-left: 3px; border-radius: 3px 3px 0 0; background: #bbb; }
.newtab svg { width: 12px; height: 12px; }
.account { display: flex; margin-left: 2px; }
.account button { width: 26px; height: 25px; }
.avatar { height: 25px; margin: 0 10px; }
.avatar svg { width: 20px; height: 20px; }

.ribbon { display: flex; height: 65px; background: #f2f2f2; border-bottom: 2px solid #e4e4e4; }
.workspace { width: 88px; height: 49px; margin: 8px 7px 0 9px; gap: 5px; border: 1px solid #dcdcdc; border-radius: 4px; font-weight: 700; background: #f2f2f2; box-sizing: border-box; }
.tools { display: flex; flex-direction: column; gap: 2px; }
.tabs { display: flex; gap: 15px; padding-left: 6px; height: 19px; }
.tabs button { padding: 0 10px; border-bottom: 2px solid transparent; }
.tabs .on { color: #0a93d8; border-bottom-color: #0a93d8; font-weight: 700; }
.groups { display: flex; }
.group { height: 41px; padding: 0 8px; border-right: 2px solid #e0e0e0; display: flex; flex-direction: column; align-items: center; justify-content: space-between; }
.group:first-child { padding-left: 4px; }
.group:nth-child(2) { padding-right: 9px; }
.group:nth-child(4) { padding: 0 9px; }
.group:last-child { border-right: 0; }
.icons { display: flex; gap: 8px; }
.icons svg { width: 26px; height: 26px; }
.filetag { font: 700 6px "Liberation Sans", Arial, sans-serif; fill: #fff; }
.gname { gap: 2px; height: 10px; white-space: nowrap; }

.canvas { flex: 1; display: grid; position: relative; align-content: space-between; }
.model { position: absolute; inset: 0; width: 100%; height: 100%; }
.upper, .lower { position: relative; display: flex; justify-content: space-between; align-items: flex-start; }
.browser { width: 240px; margin: 4px 0 0 3px; }
.panelhead { box-sizing: border-box; height: 20px; width: 240px; display: flex; align-items: center; border: 1px solid #d8d8d8; background: #f2f2f2; color: #666; }
.lead { width: 19px; display: flex; justify-content: center; }
.lead svg { width: 10px; height: 8px; margin-right: 4px; }
.panelhead button { margin: 0 8px 0 auto; }
.panelhead button svg { width: 10px; height: 10px; }
.tree { list-style: none; margin: 4px 0 0; padding: 0; display: flex; flex-direction: column; gap: 3px; }
.row { display: flex; align-items: center; height: 16px; }
.l0 { padding-left: 12px; }
.l1 { padding-left: 27px; }
.l2 { padding-left: 57px; }
.fold { flex: none; width: 16px; height: 16px; justify-content: flex-start; }
.fold svg { width: 12px; height: 12px; }
.cell { flex: none; display: flex; align-items: center; gap: 6px; height: 16px; padding: 0 7px 0 2px; background: #f2f2f2; }
.label { margin-left: 4px; white-space: nowrap; }
.rootname { display: flex; align-items: center; gap: 10px; width: 166px; height: 13px; margin-left: -2px; padding-left: 2px; box-sizing: border-box; background: #929292; color: #fff; font-weight: 700; white-space: nowrap; }
.cell input { appearance: none; box-sizing: border-box; width: 10px; height: 10px; margin: 0; border: 1px solid #333; border-radius: 50%; background: radial-gradient(#222 0 1px, #fff 3px); }
.viewcube { width: 90px; height: 90px; margin-top: 9px; }
.lower { margin-bottom: 3px; justify-content: center; }
.comments { position: absolute; left: 3px; bottom: 0; }
.navbar { display: flex; gap: 1px; padding-left: 1px; background: #f2f2f2; }
.navbar button { width: 20px; height: 20px; gap: 2px; }
.navbar .drop { width: 24px; }
.navbar .on { background: #0a96dc; }

.timeline { background: #f2f2f2; border-top: 1px solid #e0e0e0; height: 39px; }
.scroll { display: flex; justify-content: flex-end; padding-right: 5px; height: 5px; }
.thumb { width: 45%; border-radius: 0 0 3px 3px; background: #c8c8c8; }
.strip { display: flex; align-items: flex-start; }
.playback { display: flex; padding: 7px 9px 0 3px; }
.playback button { width: 20px; height: 20px; }
.features { flex: 1; display: flex; list-style: none; margin: 4px 0 0; padding: 0; border-bottom: 2px solid #cbcbcb; }
.features li { flex: 1; position: relative; display: flex; flex-direction: column; align-items: center; }
.features li::after { content: ""; width: 2px; height: 4px; background: #cbcbcb; }
.features button { width: 19px; height: 19px; border-radius: 2px; }
.features .sel { background: #e8e820; }
.playhead { position: absolute; right: -4px; top: 0; width: 8px; height: 26px; }
.settings { width: 38px; height: 34px; }
</style>
